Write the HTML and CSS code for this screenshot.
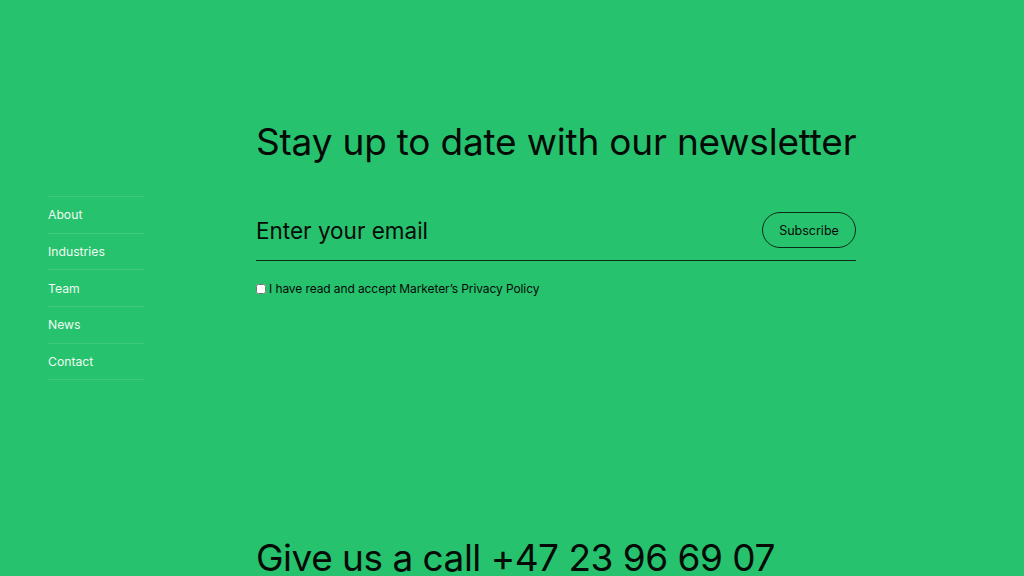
FILE: index.html
```html
<!DOCTYPE html>
<html lang="en">
<head>
<meta charset="utf-8">
<title>Newsletter</title>
<link rel="stylesheet" href="styles.css">
</head>
<body>
<div class="page">
  <nav class="side">
    <ul class="nav-list">
      <li><a href="#">About</a></li>
      <li><a href="#">Industries</a></li>
      <li><a href="#">Team</a></li>
      <li><a href="#">News</a></li>
      <li><a href="#">Contact</a></li>
    </ul>
  </nav>
  <main class="main">
    <h1 class="title">Stay up to date with our newsletter</h1>
    <form class="form">
      <div class="field">
        <span class="placeholder">Enter your email</span>
        <button type="button" class="btn">Subscribe</button>
      </div>
      <label class="consent"><input type="checkbox" class="check"> I have read and accept Marketer’s Privacy Policy</label>
    </form>
    <h2 class="call">Give us a call +47 23 96 69 07</h2>
  </main>
</div>
</body>
</html>
```
FILE: styles.css
```css
html, body {
  margin: 0;
  padding: 0;
  background: #26c26d;
  height: 100%;
  overflow: hidden;
}
body {
  font-family: Inter, "Liberation Sans", sans-serif;
  color: #050a07;
}
.page {
  display: flex;
  padding-left: 48px;
}
.side {
  width: 96px;
  padding-top: 196px;
  flex: none;
}
.nav-list {
  list-style: none;
  margin: 0;
  padding: 0;
  border-top: 1px solid rgba(255,255,255,0.12);
}
.nav-list li {
  border-bottom: 1px solid rgba(255,255,255,0.12);
  height: 35.7px;
  display: flex;
  align-items: center;
}
.nav-list a {
  color: #eefaf2;
  text-decoration: none;
  font-size: 12.2px;
}
.main {
  margin-left: 112px;
  width: 600px;
  padding-top: 117px;
}
.title {
  margin: 0;
  font-weight: 400;
  font-size: 37px;
  letter-spacing: -0.2px;
  line-height: 50px;
  white-space: nowrap;
}
.form {
  margin-top: 45px;
}
.field {
  display: flex;
  align-items: center;
  justify-content: space-between;
  border-bottom: 1px solid #0d2a18;
  height: 48px;
}
.placeholder {
  font-size: 22.5px;
  margin-top: -12px;
}
.btn {
  font-family: inherit;
  font-size: 12.5px;
  color: #050a07;
  background: transparent;
  border: 1px solid #0d2a18;
  border-radius: 18px;
  height: 36px;
  width: 94px;
  padding: 0;
  margin-top: -12px;
}
.consent {
  display: flex;
  align-items: center;
  gap: 3px;
  margin-top: 20px;
  font-size: 12px;
  letter-spacing: -0.1px;
}
.check {
  margin: 0;
  width: 10px;
  height: 10px;
}
.call {
  margin: 0;
  margin-top: 240px;
  font-weight: 400;
  font-size: 37px;
  letter-spacing: -0.5px;
  line-height: 44px;
  white-space: nowrap;
}
```
